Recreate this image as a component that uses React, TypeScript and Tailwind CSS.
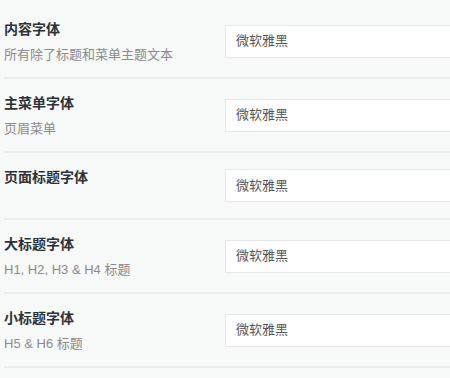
import React from "react";

const rows = [
  { title: "内容字体", desc: "所有除了标题和菜单主题文本" },
  { title: "主菜单字体", desc: "页眉菜单" },
  { title: "页面标题字体", desc: "" },
  { title: "大标题字体", desc: "H1, H2, H3 & H4 标题" },
  { title: "小标题字体", desc: "H5 & H6 标题" },
];

export default function App() {
  return (
    <div
      className="w-[450px] h-[378px] overflow-hidden bg-[#f8f9f9] pt-[5px]"
      style={{ fontFamily: '"Liberation Sans", Arial, "Noto Sans CJK SC", sans-serif' }}
    >
      <div className="w-[520px] pl-[4px]">
        {rows.map((r, i) => (
          <div key={i} className="border-b-2 border-[#ebeded]">
            <div className="flex min-h-[65px]">
              <div className="w-[221px] shrink-0 pt-[14px] pb-[12px]">
                <div className="text-[14px] leading-[20px] font-bold text-[#2c3338]">{r.title}</div>
                {r.desc && (
                  <div className="mt-[6px] text-[13px] leading-[20px] text-[#8a8a8a]">{r.desc}</div>
                )}
              </div>
              <div className="self-center flex-1">
                <div className="h-[33px] bg-white border border-[#e6e8e8] flex items-center pl-[10px] text-[13px] text-[#555555]">
                  微软雅黑
                </div>
              </div>
            </div>
          </div>
        ))}
      </div>
    </div>
  );
}
